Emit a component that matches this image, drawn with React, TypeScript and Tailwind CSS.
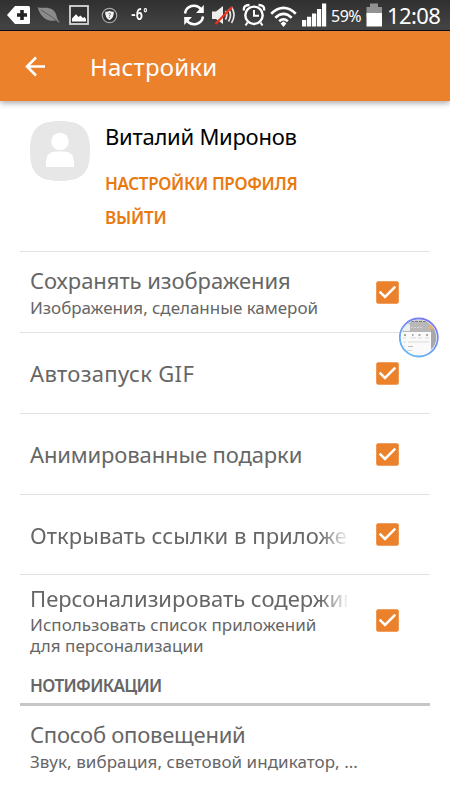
import clsx from 'clsx'

interface SettingRowProps {
  title: string
  titleClass?: string
  summary?: string[]
  summaryClass?: string
  checked?: boolean
  faded?: boolean
  className?: string
}

function Checkbox() {
  return (
    <svg className="size-[23px] shrink-0" viewBox="0 0 23 23" fill="none">
      <rect x="0.2" y="0.2" width="22.6" height="22.6" rx="2" fill="#ec812c" />
      <path d="M3.6 10.6L9 16L19.3 5.7" stroke="#fff" strokeWidth="2.5" />
    </svg>
  )
}

function SettingRow({ title, titleClass, summary, summaryClass, checked = true, faded = false, className }: SettingRowProps) {
  return (
    <div className={clsx('flex items-center border-t border-[#e2e2e2] pl-[10px] pr-[31px]', className)}>
      <div className="w-[317px] text-[#666]">
        <p
          className={clsx(
            'overflow-hidden whitespace-nowrap text-[22px] leading-[28px]',
            faded && '[mask-image:linear-gradient(to_right,#000_290px,transparent_320px)]',
            titleClass,
          )}
        >
          {title}
        </p>
        {summary && (
          <div className={clsx('whitespace-nowrap text-[17px] leading-[20px]', summaryClass)}>
            {summary.map((line) => (
              <p key={line}>{line}</p>
            ))}
          </div>
        )}
      </div>
      {checked && (
        <div className="ml-auto">
          <Checkbox />
        </div>
      )}
    </div>
  )
}

function StatusBar() {
  return (
    <div className="flex h-[31px] items-center border-b border-[#0b0b20] bg-linear-to-b from-[#303030] to-[#454545] text-white">
      <svg className="ml-[7px] h-[20px] w-[24px]" viewBox="0 0 24 20">
        <path d="M0 10L8 1H21.5Q23 1 23 2.5V17.5Q23 19 21.5 19H8Z" fill="#fff" />
        <path d="M13.2 5H16.8V8.2H20V11.8H16.8V15H13.2V11.8H10V8.2H13.2Z" fill="#222" />
      </svg>
      <svg className="ml-[6px] h-[18px] w-[24px]" viewBox="0 0 24 18">
        <path d="M0.5 1C5 3 11 0 16 4C20 7 19 11 21 14L23 17L18.5 14.5C12 16 4 13 0.5 1Z" fill="#8b8b8b" />
        <path d="M4 4C9 7 14 10 20 15" stroke="#555" strokeWidth="0.9" fill="none" />
      </svg>
      <svg className="ml-[8px] size-[20px]" viewBox="0 0 20 20">
        <rect x="1" y="1" width="18" height="18" fill="#333" stroke="#d8d8dc" strokeWidth="1.8" />
        <path d="M3 16.5V13.5L7 9.3L9.5 12L11.5 10.5L14 13L15.5 12L17 14V16.5Z" fill="#fff" />
      </svg>
      <svg className="ml-[12px] size-[17px]" viewBox="0 0 17 17">
        <circle cx="8.5" cy="8.5" r="7.2" fill="#333" stroke="#a5a5a5" strokeWidth="1.2" />
        <path d="M4.2 4.7Q7 5 8.5 3.8Q10 5 12.8 4.7Q13.2 10.5 8.5 13.2Q3.8 10.5 4.2 4.7Z" fill="#f2f2f2" />
        <path d="M7.5 6.7Q8.5 5.9 9.5 6.7Q9.6 7.8 8.5 8.5V9.3M8.5 10.2V11" stroke="#555" strokeWidth="0.8" fill="none" />
      </svg>
      <span className="ml-[13px] w-[21px] origin-left scale-x-[.77] whitespace-nowrap font-['Roboto'] text-[16px] font-bold leading-[20px]">-6°</span>
      <svg className="ml-[30px] h-[24px] w-[24px]" viewBox="0 0 24 24" fill="none" stroke="#fff" strokeWidth="2.5">
        <path d="M3 10.5A9 9 0 0 1 19 6.2M21 13.5A9 9 0 0 1 5 17.8" />
        <path d="M21.8 2V10H14ZM2.2 22V14H10Z" fill="#fff" stroke="none" />
      </svg>
      <svg className="ml-[5px] h-[22px] w-[26px]" viewBox="0 0 26 22" fill="none">
        <path d="M1 7.5H5L12 2V20L5 15H1Z" fill="#eee" />
        <path d="M14.5 7Q17 11 14.5 15.5M17.5 5Q21.5 11 17.5 17.5M20.5 3Q25.5 11 20.5 19" stroke="#e5e5e5" strokeWidth="1.7" />
        <path d="M4.5 20L21 3" stroke="#f03018" strokeWidth="2.2" />
      </svg>
      <svg className="ml-[5px] size-[24px]" viewBox="0 0 24 24" fill="none" stroke="#fff">
        <circle cx="12" cy="12.3" r="8.7" strokeWidth="2.4" />
        <path d="M12 7V12.8H17M5.5 19.5L3.5 22.5M18.5 19.5L20.5 22.5" strokeWidth="2" />
        <path d="M2 7.5Q1 2 7.5 2M22 7.5Q23 2 16.5 2" strokeWidth="2.3" />
      </svg>
      <svg className="ml-[4px] mt-[3px] h-[22px] w-[27px]" viewBox="0 0 27 22" fill="none" stroke="#fff" strokeWidth="2.6">
        <path d="M1.2 7.8Q13.5 -4 25.8 7.8M5.3 11.7Q13.5 4 21.7 11.7M9.2 15.3Q13.5 11.2 17.8 15.3" />
        <path d="M10.6 17.6L13.5 15.2L16.4 17.6L13.5 21Z" fill="#fff" stroke="none" />
      </svg>
      <svg className="ml-[5px] h-[24px] w-[25px]" viewBox="0 0 25 24" fill="#fff">
        <path d="M0 17H4.2V23.5H0ZM5 13.8H9.2V23.5H5ZM10 10.4H14.2V23.5H10ZM15 6H19.2V23.5H15ZM20 0.5H24.2V23.5H20Z" />
      </svg>
      <span className="ml-[4px] mt-[2px] w-[31px] whitespace-nowrap text-[16px] leading-[20px] tracking-[-0.5px]">59%</span>
      <svg className="ml-[4px] h-[24px] w-[17px]" viewBox="0 0 17 24">
        <path d="M4 0.5H12V4H16V14H0.5V4H4Z" fill="#929292" />
        <path d="M0.5 10H16V23.5H0.5Z" fill="#fff" />
      </svg>
      <span className="ml-[4px] whitespace-nowrap text-[22px] leading-[28px] tracking-[-0.6px]">12:08</span>
    </div>
  )
}

function Header() {
  return (
    <header className="relative z-10 flex h-[70px] items-center bg-[#ec812c] text-white shadow-[0_2px_6px_rgba(0,0,0,0.35)]">
      <svg className="ml-[25px] size-[21px]" viewBox="0 0 21 21" fill="none" stroke="#fff" strokeWidth="2.5">
        <path d="M20 10.5H2M11 1.5L2 10.5L11 19.5" />
      </svg>
      <h1 className="ml-[44px] mt-[2px] text-[24px] leading-[32px] tracking-[0.2px]">Настройки</h1>
    </header>
  )
}

function Profile() {
  return (
    <section className="flex h-[150px] pl-[30px] pt-[20px]">
      <svg className="size-[60px]" viewBox="0 0 60 60">
        <path d="M30 0C52 0 60 8 60 30C60 52 52 60 30 60C8 60 0 52 0 30C0 8 8 0 30 0Z" fill="#e7e7e7" />
        <circle cx="30" cy="20.5" r="8.7" fill="#fff" />
        <path d="M16 46V41Q16 30.5 26 30.5H34Q44 30.5 44 41V46Z" fill="#fff" />
      </svg>
      <div className="ml-[15px] whitespace-nowrap">
        <p className="text-[22px] leading-[30px] tracking-[-0.25px] text-black">Виталий Миронов</p>
        <p className="mt-[21px] text-[17px] font-semibold leading-[24px] tracking-[-0.35px] text-[#e87a10]">НАСТРОЙКИ ПРОФИЛЯ</p>
        <p className="mt-[10px] text-[17px] font-semibold leading-[24px] tracking-[-0.2px] text-[#e87a10]">ВЫЙТИ</p>
      </div>
    </section>
  )
}

// Floating shortcut with a miniature of the previous screen
function FloatingBubble() {
  return (
    <svg className="absolute left-[398px] top-[317px] size-[42px]" viewBox="0 0 42 42">
      <defs>
        <linearGradient id="ring" x1="0.8" y1="0" x2="0.2" y2="1">
          <stop offset="0" stopColor="#7a76ec" />
          <stop offset="1" stopColor="#60bbf8" />
        </linearGradient>
        <clipPath id="lens">
          <circle cx="20.8" cy="20.5" r="17.5" />
        </clipPath>
      </defs>
      <circle cx="20.8" cy="20.5" r="19" fill="#fff" stroke="url(#ring)" strokeWidth="1.8" />
      <g clipPath="url(#lens)">
        <rect width="42" height="42" fill="#fafafa" />
        <rect width="42" height="15" fill="#b8b8b8" />
        <rect width="42" height="5" fill="#d0d0d0" />
        <rect x="33" y="5" width="9" height="37" fill="#a9a9a9" />
        <rect x="5" y="7" width="7" height="7" rx="1" fill="#eee" />
        <rect x="31" y="8" width="5" height="4" fill="#f5ad68" />
        <path d="M13 4.5H29" stroke="#777" strokeDasharray="3 1" />
        <path d="M13 10.5H25" stroke="#d5d5d5" strokeDasharray="2 1" />
        <path d="M6 18H8M14 18H15.5M20.5 18H22.5M28 18H30" stroke="#aaa" strokeWidth="2" />
        <path d="M5 20.8H8M12 20.8H18M20 20.8H24M27 20.8H31M5 25H8M10 25H31M5 29.5H7M6 33.5H14" stroke="#dadada" />
        <path d="M10 29.5H15" stroke="#bbb" />
      </g>
    </svg>
  )
}

export default function App() {
  return (
    <div className="relative flex h-[800px] w-[450px] flex-col overflow-hidden bg-white font-['Noto_Sans',sans-serif]">
      <StatusBar />
      <Header />
      <Profile />
      <main className="mx-[20px]">
        <SettingRow
          title="Сохранять изображения"
          titleClass="tracking-[-0.05px]"
          summary={['Изображения, сделанные камерой']}
          summaryClass="mt-[4px] tracking-[-0.04px]"
          className="h-[81px]"
        />
        <SettingRow title="Автозапуск GIF" titleClass="tracking-[0.35px]" className="h-[81px]" />
        <SettingRow title="Анимированные подарки" titleClass="tracking-[-0.13px]" className="h-[81px]" />
        <SettingRow title="Открывать ссылки в приложении" titleClass="tracking-[0.05px]" faded className="h-[80px]" />
        <SettingRow
          title="Персонализировать содержимое"
          summary={['Использовать список приложений', 'для персонализации']}
          summaryClass="mt-[2px] leading-[21px] tracking-[0.04px]"
          faded
          className="h-[91px]"
        />
        <h2 className="h-[41px] border-b-[3px] border-[#c6c6c6] pl-[10px] pt-[9px] text-[17px] font-semibold leading-[24px] tracking-[-0.65px] text-[#666]">
          НОТИФИКАЦИИ
        </h2>
        <SettingRow
          title="Способ оповещений"
          titleClass="tracking-[-0.25px]"
          summary={['Звук, вибрация, световой индикатор, ...']}
          summaryClass="mt-[4px] tracking-[0.05px]"
          checked={false}
          className="h-[80px] border-t-0"
        />
      </main>
      <FloatingBubble />
    </div>
  )
}
